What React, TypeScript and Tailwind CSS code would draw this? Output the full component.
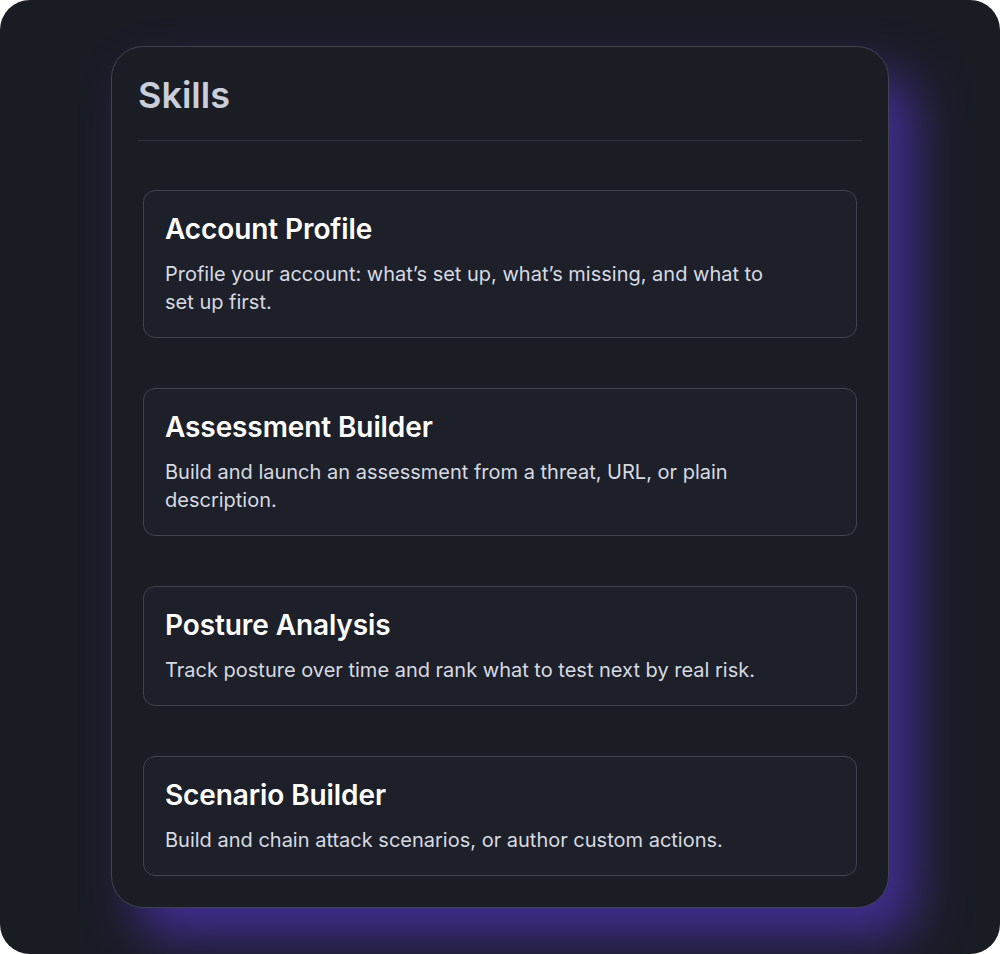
const skills = [
  {
    title: "Account Profile",
    description:
      "Profile your account: what’s set up, what’s missing, and what to set up first.",
  },
  {
    title: "Assessment Builder",
    description:
      "Build and launch an assessment from a threat, URL, or plain description.",
  },
  {
    title: "Posture Analysis",
    description: "Track posture over time and rank what to test next by real risk.",
  },
  {
    title: "Scenario Builder",
    description: "Build and chain attack scenarios, or author custom actions.",
  },
];

function SkillCard({ title, description }: { title: string; description: string }) {
  return (
    <div className="rounded-xl border border-[#40434d] bg-[#1e2029] px-[21px] pt-[22px] pb-[21px]">
      <h3 className="text-[28px] leading-[32px] font-semibold tracking-[-0.1px] text-white">{title}</h3>
      <p className="mt-[15px] max-w-[610px] text-[20px] leading-7 text-[#d6dae3]">{description}</p>
    </div>
  );
}

export default function App() {
  return (
    <div className="min-h-screen bg-white">
      <div
        className="h-[954px] w-[1000px] overflow-hidden rounded-[30px] bg-[#1a1c24] pt-[46px] pl-[111px]"
        style={{ fontFamily: "Inter, 'Noto Sans', sans-serif" }}
      >
        <div className="w-[778px] rounded-[32px] border border-[#41444f] bg-[#1b1d25] px-[26px] pt-[28px] pb-[31px] shadow-[26px_30px_50px_rgba(92,56,215,0.6)]">
          <h2 className="text-[36px] leading-10 font-semibold text-[#c9ceda]">Skills</h2>
          <div className="mt-[25px] h-px bg-[#30333d]" />
          <div className="mt-[49px] flex flex-col gap-[50px] px-[5px]">
            {skills.map((s) => (
              <SkillCard key={s.title} title={s.title} description={s.description} />
            ))}
          </div>
        </div>
      </div>
    </div>
  );
}
